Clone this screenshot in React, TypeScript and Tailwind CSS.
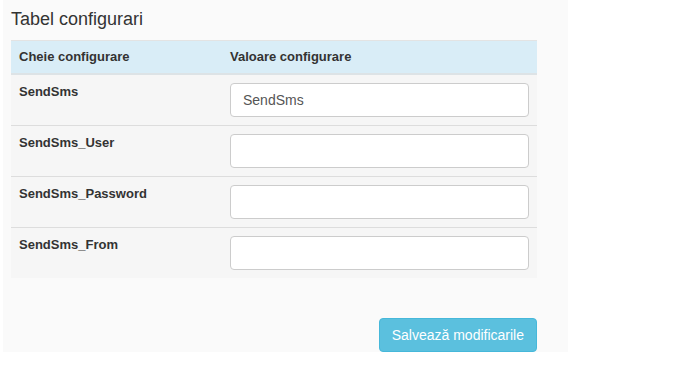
const ROWS = [
  {key: 'SendSms', value: 'SendSms'},
  {key: 'SendSms_User', value: ''},
  {key: 'SendSms_Password', value: ''},
  {key: 'SendSms_From', value: ''},
];

export default function App() {
  return (
    <div className="w-[696px] h-[366px] bg-white" style={{fontFamily: '"Liberation Sans", Arial, sans-serif'}}>
      <div className="ml-[3px] w-[565px] h-[352px] bg-[#fafafa] px-2 pt-[7px] text-[#333] overflow-hidden">
        <h3 className="text-[18px] leading-[24px] ml-0 mb-[9px]">Tabel configurari</h3>

        <table className="w-[526px] border-collapse bg-[#f6f6f6] text-[13px] leading-[18px]">
          <thead>
            <tr className="bg-[#d9edf7]">
              <th className="w-[211px] text-left font-bold px-2 pt-[7px] pb-[7px] border-t border-[#e3e3e3] border-b-2 border-b-[#dde3e6]">
                Cheie configurare
              </th>
              <th className="text-left font-bold px-2 pt-[7px] pb-[7px] border-t border-[#e3e3e3] border-b-2 border-b-[#dde3e6]">
                Valoare configurare
              </th>
            </tr>
          </thead>
          <tbody>
            {ROWS.map((row, i) => (
              <tr key={row.key} className={i > 0 ? 'border-t border-[#dddddd]' : ''}>
                <td className="align-top font-bold px-2 pt-2 pb-2">{row.key}</td>
                <td className="align-top px-2 py-2">
                  <input
                    defaultValue={row.value}
                    className="w-full h-[34px] px-3 bg-white border border-[#cccccc] rounded-[4px] text-[14px] text-[#555] outline-none"
                    style={{fontFamily: '"Liberation Sans", Arial, sans-serif'}}
                  />
                </td>
              </tr>
            ))}
          </tbody>
        </table>

        <div className="w-[526px] flex justify-end mt-[40px]">
          <button className="h-[34px] px-3 bg-[#5bc0de] border border-[#46b8da] rounded-[4px] text-white text-[14px] leading-[20px]">
            Salvează modificarile
          </button>
        </div>
      </div>
    </div>
  );
}
